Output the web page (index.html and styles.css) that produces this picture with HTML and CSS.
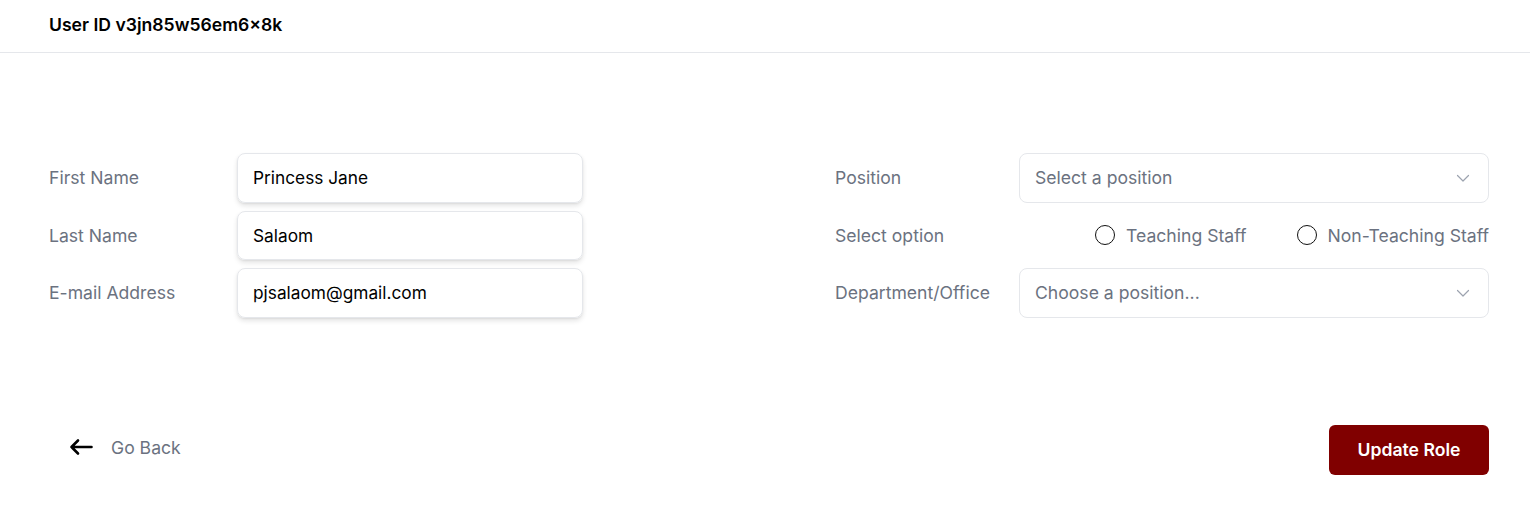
FILE: index.html
```html
<!DOCTYPE html>
<html>
<head>
<meta charset="utf-8">
<link rel="stylesheet" href="styles.css">
</head>
<body>
<header class="topbar">
  <h1 class="title">User ID v3jn85w56em6×8k</h1>
</header>
<main class="page">
  <section class="form">
    <div class="col col-left">
      <div class="row">
        <label class="label label-left">First Name</label>
        <div class="input input-left">Princess Jane</div>
      </div>
      <div class="row">
        <label class="label label-left">Last Name</label>
        <div class="input input-left">Salaom</div>
      </div>
      <div class="row">
        <label class="label label-left">E-mail Address</label>
        <div class="input input-left">pjsalaom@gmail.com</div>
      </div>
    </div>
    <div class="col col-right">
      <div class="row">
        <label class="label label-right">Position</label>
        <div class="select">
          <span class="placeholder">Select a position</span>
          <svg class="chev" width="14" height="14" viewBox="0 0 14 14"><path d="M1.5 4.5l5.5 5.5 5.5-5.5" fill="none" stroke="#9ca3af" stroke-width="1.2" stroke-linecap="round" stroke-linejoin="round"/></svg>
        </div>
      </div>
      <div class="row">
        <label class="label label-right">Select option</label>
        <div class="radios">
          <span class="radio"><span class="circle"></span>Teaching Staff</span>
          <span class="radio"><span class="circle"></span>Non-Teaching Staff</span>
        </div>
      </div>
      <div class="row">
        <label class="label label-right">Department/Office</label>
        <div class="select">
          <span class="placeholder">Choose a position...</span>
          <svg class="chev" width="14" height="14" viewBox="0 0 14 14"><path d="M1.5 4.5l5.5 5.5 5.5-5.5" fill="none" stroke="#9ca3af" stroke-width="1.2" stroke-linecap="round" stroke-linejoin="round"/></svg>
        </div>
      </div>
    </div>
  </section>
  <section class="actions">
    <a class="back">
      <svg width="24" height="20" viewBox="0 0 24 20"><path d="M22.5 10H2.5M9 3.5L2.5 10 9 16.5" fill="none" stroke="#000" stroke-width="2.6" stroke-linecap="round" stroke-linejoin="round"/></svg>
      <span>Go Back</span>
    </a>
    <button class="btn">Update Role</button>
  </section>
</main>
</body>
</html>
```
FILE: styles.css
```css
* { box-sizing: border-box; }
html, body { margin: 0; padding: 0; background: #fff; }
body { font-family: Inter, "Noto Sans", sans-serif; color: #111827; font-size: 17.6px; }
.topbar {
  height: 53px;
  border-bottom: 1px solid #e5e7eb;
  display: flex;
  align-items: center;
  padding: 0 49px 4px;
}
.title { margin: 0; font-size: 17.6px; font-weight: 600; color: #000; }
.page { padding: 100px 41px 0 49px; }
.form { display: flex; justify-content: space-between; }
.col { display: flex; flex-direction: column; gap: 8px; }
.row { display: flex; align-items: center; height: 49.5px; }
.label { color: #6b7280; font-size: 17.6px; }
.label-left { width: 188px; }
.label-right { width: 184px; }
.input {
  width: 346px;
  height: 49.5px;
  border: 1px solid #e5e7eb;
  border-radius: 8px;
  box-shadow: 0 3px 5px rgba(0,0,0,0.1), 0 1px 2px rgba(0,0,0,0.06);
  display: flex;
  align-items: center;
  padding: 0 15px;
  color: #000;
  font-size: 17.3px;
}
.select {
  width: 470px;
  height: 49.5px;
  border: 1px solid #e5e7eb;
  border-radius: 8px;
  display: flex;
  align-items: center;
  justify-content: space-between;
  padding: 0 18px 0 15px;
  font-size: 17.6px;
}
.placeholder { color: #6b7280; }
.chev { display: block; }
.radios { width: 470px; display: flex; justify-content: flex-end; gap: 50px; }
.radio { display: flex; align-items: center; gap: 11px; color: #6b7280; font-size: 17.6px; }
.circle {
  width: 20px; height: 20px;
  border: 1.5px solid #111;
  border-radius: 50%;
  display: inline-block;
}
.actions {
  display: flex;
  justify-content: space-between;
  align-items: center;
  margin-top: 107px;
}
.back {
  display: flex;
  align-items: center;
  gap: 18px;
  padding-left: 20px;
  margin-bottom: 5px;
  color: #6b7280;
  font-size: 17.6px;
}
.btn {
  width: 160px;
  height: 50px;
  background: #800000;
  color: #fff;
  border: none;
  border-radius: 6px;
  font-family: Inter, sans-serif;
  font-size: 17.6px;
  font-weight: 600;
}
```
